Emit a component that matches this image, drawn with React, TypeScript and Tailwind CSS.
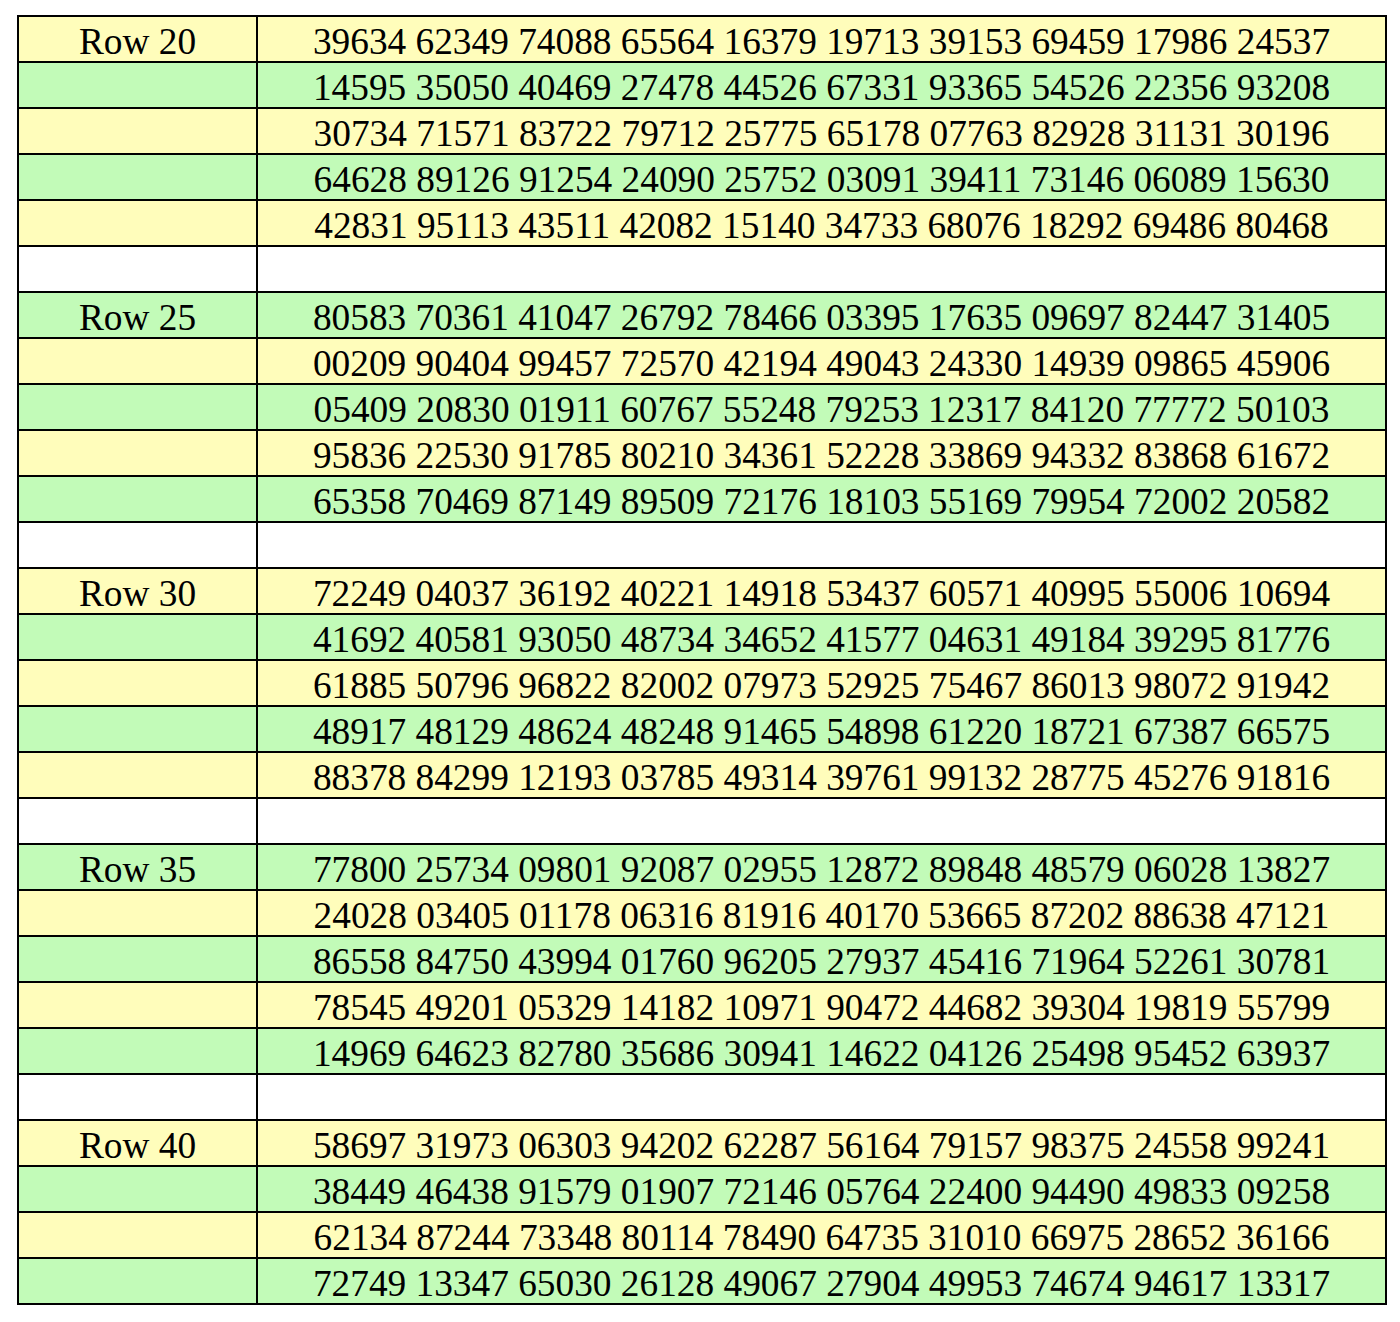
import React from 'react';

const YELLOW = 'bg-[#fffdbb]';
const GREEN = 'bg-[#c2fbb8]';

// Each block: label + lines of random digits
const blocks: { label: string; lines: string[] }[] = [
  {
    label: 'Row 20',
    lines: [
      '39634 62349 74088 65564 16379 19713 39153 69459 17986 24537',
      '14595 35050 40469 27478 44526 67331 93365 54526 22356 93208',
      '30734 71571 83722 79712 25775 65178 07763 82928 31131 30196',
      '64628 89126 91254 24090 25752 03091 39411 73146 06089 15630',
      '42831 95113 43511 42082 15140 34733 68076 18292 69486 80468',
    ],
  },
  {
    label: 'Row 25',
    lines: [
      '80583 70361 41047 26792 78466 03395 17635 09697 82447 31405',
      '00209 90404 99457 72570 42194 49043 24330 14939 09865 45906',
      '05409 20830 01911 60767 55248 79253 12317 84120 77772 50103',
      '95836 22530 91785 80210 34361 52228 33869 94332 83868 61672',
      '65358 70469 87149 89509 72176 18103 55169 79954 72002 20582',
    ],
  },
  {
    label: 'Row 30',
    lines: [
      '72249 04037 36192 40221 14918 53437 60571 40995 55006 10694',
      '41692 40581 93050 48734 34652 41577 04631 49184 39295 81776',
      '61885 50796 96822 82002 07973 52925 75467 86013 98072 91942',
      '48917 48129 48624 48248 91465 54898 61220 18721 67387 66575',
      '88378 84299 12193 03785 49314 39761 99132 28775 45276 91816',
    ],
  },
  {
    label: 'Row 35',
    lines: [
      '77800 25734 09801 92087 02955 12872 89848 48579 06028 13827',
      '24028 03405 01178 06316 81916 40170 53665 87202 88638 47121',
      '86558 84750 43994 01760 96205 27937 45416 71964 52261 30781',
      '78545 49201 05329 14182 10971 90472 44682 39304 19819 55799',
      '14969 64623 82780 35686 30941 14622 04126 25498 95452 63937',
    ],
  },
  {
    label: 'Row 40',
    lines: [
      '58697 31973 06303 94202 62287 56164 79157 98375 24558 99241',
      '38449 46438 91579 01907 72146 05764 22400 94490 49833 09258',
      '62134 87244 73348 80114 78490 64735 31010 66975 28652 36166',
      '72749 13347 65030 26128 49067 27904 49953 74674 94617 13317',
    ],
  },
];

type Row = { label: string; text: string; bg: string };

function buildRows(): Row[] {
  const rows: Row[] = [];
  let stripe = 0;
  blocks.forEach((block, b) => {
    block.lines.forEach((line, i) => {
      rows.push({
        label: i === 0 ? block.label : '',
        text: line,
        bg: stripe % 2 === 0 ? YELLOW : GREEN,
      });
      stripe++;
    });
    // blank spacer row between blocks
    if (b < blocks.length - 1) {
      rows.push({ label: '', text: '', bg: 'bg-white' });
    }
  });
  return rows;
}

export default function App() {
  const rows = buildRows();

  return (
    <div className="min-h-[1322px] bg-white pt-[15px] pl-[17px]">
      <div
        className="w-[1370px] border-2 border-black text-black text-[37.33px] leading-none"
        style={{ fontFamily: '"Liberation Serif", "Times New Roman", serif' }}
      >
        {rows.map((row, idx) => (
          <div
            key={idx}
            className={`flex h-[44px] box-content ${row.bg} ${idx > 0 ? 'border-t-2 border-black' : ''}`}
          >
            <div className="w-[239px] shrink-0 border-r-2 border-black flex items-center justify-center pt-[6px]">
              {row.label}
            </div>
            <div className="flex-1 flex items-center justify-center whitespace-pre pt-[6px]">
              {row.text}
            </div>
          </div>
        ))}
      </div>
    </div>
  );
}
